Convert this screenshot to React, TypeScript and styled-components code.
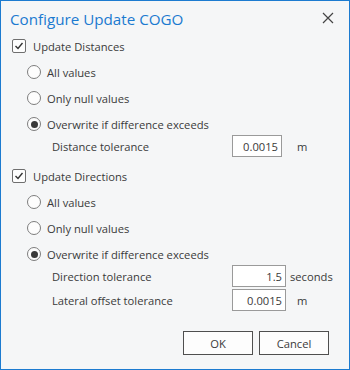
import React from "react";
import styled, { createGlobalStyle } from "styled-components";

const Global = createGlobalStyle`
  html, body { margin: 0; padding: 0; background: #f5f6f7; }
  * { box-sizing: border-box; }
`;

const Dialog = styled.div`
  width: 350px;
  height: 370px;
  border: 1px solid #1c7bd0;
  background: #f5f6f7;
  font-family: "Open Sans", "Noto Sans", sans-serif;
  font-size: 11.2px;
  color: #3a3a3a;
  display: flex;
  flex-direction: column;
`;

const TitleBar = styled.div`
  height: 34px;
  display: flex;
  align-items: center;
  justify-content: space-between;
  padding: 2px 15px 0 9px;
`;

const Title = styled.div`
  font-size: 15.2px;
  color: #1b7ad0;
`;

const CloseButton = styled.div`
  width: 12px;
  height: 12px;
  display: flex;
  margin-top: -2px;
`;

const Body = styled.div`
  display: flex;
  flex-direction: column;
  padding-left: 11px;
`;

const CheckRow = styled.div<{ $mt?: number }>`
  height: 22px;
  display: flex;
  align-items: center;
  gap: 7px;
  margin-top: ${(p) => p.$mt ?? 0}px;
`;

const CheckBox = styled.div`
  width: 14px;
  height: 14px;
  border: 1px solid #6f6f6f;
  border-radius: 2px;
  background: #fdfdfd;
  display: flex;
  align-items: center;
  justify-content: center;
`;

const RadioRow = styled.div`
  height: 22px;
  margin-top: 4px;
  margin-left: 15px;
  display: flex;
  align-items: center;
  gap: 6px;
`;

const RadioCircle = styled.div<{ $on?: boolean }>`
  width: 14px;
  height: 14px;
  border-radius: 50%;
  border: 1px solid #7d7d7d;
  background: #fdfdfd;
  display: flex;
  align-items: center;
  justify-content: center;
  &::after {
    content: "";
    width: 7px;
    height: 7px;
    border-radius: 50%;
    background: ${(p) => (p.$on ? "#3a3a3a" : "transparent")};
  }
`;

const TolRow = styled.div<{ $mt?: number }>`
  height: 22px;
  margin-top: ${(p) => p.$mt ?? 0}px;
  display: grid;
  grid-template-columns: 180px auto auto;
  justify-content: start;
  align-items: center;
  padding-left: 40px;
`;

const TolLabel = styled.span``;

const TolInput = styled.div<{ $w: number }>`
  width: ${(p) => p.$w}px;
  height: 22px;
  border: 1px solid #9a9a9a;
  background: #ffffff;
  display: flex;
  align-items: center;
  justify-content: flex-end;
  padding-right: 3px;
`;

const Unit = styled.span<{ $ml: number }>`
  margin-left: ${(p) => p.$ml}px;
`;

const Footer = styled.div`
  display: flex;
  justify-content: flex-end;
  gap: 6px;
  margin-top: 20px;
  padding-right: 20px;
`;

const Button = styled.div`
  width: 70px;
  height: 24px;
  border: 1px solid #4f4f4f;
  background: #fdfdfd;
  display: flex;
  align-items: center;
  justify-content: center;
`;

const Check = () => (
  <CheckBox>
    <svg width="10" height="10" viewBox="0 0 10 10">
      <polyline points="1.5,5 4,7.5 8.5,2" fill="none" stroke="#333" strokeWidth="1.4" />
    </svg>
  </CheckBox>
);

const Radio = ({ on, label }: { on?: boolean; label: string }) => (
  <RadioRow>
    <RadioCircle $on={on} />
    <span>{label}</span>
  </RadioRow>
);

export default function App() {
  return (
    <>
      <Global />
      <Dialog>
        <TitleBar>
          <Title>Configure Update COGO</Title>
          <CloseButton>
            <svg width="12" height="12" viewBox="0 0 12 12">
              <path d="M1 1L11 11M11 1L1 11" stroke="#444" strokeWidth="1.2" />
            </svg>
          </CloseButton>
        </TitleBar>
        <Body>
          <CheckRow>
            <Check />
            <span>Update Distances</span>
          </CheckRow>
          <Radio label="All values" />
          <Radio label="Only null values" />
          <Radio on label="Overwrite if difference exceeds" />
          <TolRow>
            <TolLabel>Distance tolerance</TolLabel>
            <TolInput $w={50}>0.0015</TolInput>
            <Unit $ml={15}>m</Unit>
          </TolRow>
          <CheckRow $mt={8}>
            <Check />
            <span>Update Directions</span>
          </CheckRow>
          <Radio label="All values" />
          <Radio label="Only null values" />
          <Radio on label="Overwrite if difference exceeds" />
          <TolRow>
            <TolLabel>Direction tolerance</TolLabel>
            <TolInput $w={54}>1.5</TolInput>
            <Unit $ml={4}>seconds</Unit>
          </TolRow>
          <TolRow $mt={2}>
            <TolLabel>Lateral offset tolerance</TolLabel>
            <TolInput $w={54}>0.0015</TolInput>
            <Unit $ml={11}>m</Unit>
          </TolRow>
        </Body>
        <Footer>
          <Button>OK</Button>
          <Button>Cancel</Button>
        </Footer>
      </Dialog>
    </>
  );
}
